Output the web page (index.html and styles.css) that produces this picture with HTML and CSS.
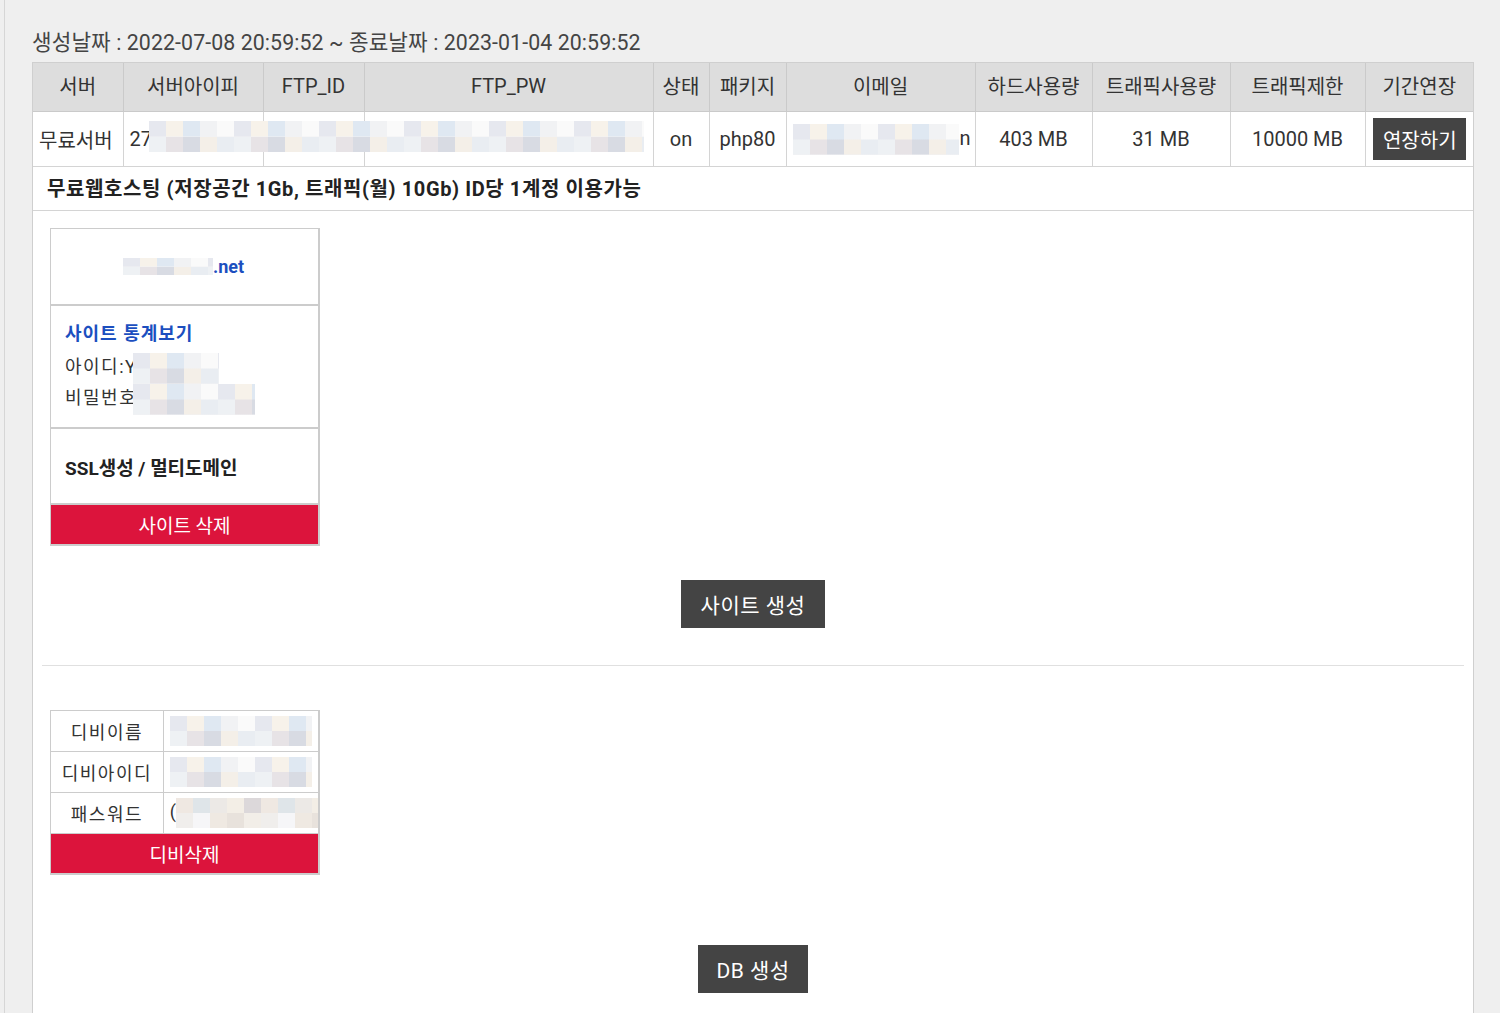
FILE: index.html
```html
<!DOCTYPE html>
<html lang="ko">
<head>
    <meta charset="UTF-8">
    <title>호스팅 관리</title>
    <link rel="stylesheet" href="styles.css">
</head>
<body>

    <div class="wrap">
        <div class="period">생성날짜 : 2022-07-08 20:59:52 ~ 종료날짜 : 2023-01-04 20:59:52</div>

        <div class="panel">
            <table class="host-table">
                <colgroup>
                    <col class="w-server">
                    <col class="w-ip">
                    <col class="w-ftpid">
                    <col class="w-ftppw">
                    <col class="w-state">
                    <col class="w-pkg">
                    <col class="w-mail">
                    <col class="w-disk">
                    <col class="w-traffic">
                    <col class="w-limit">
                    <col class="w-extend">
                </colgroup>
                <thead>
                    <tr>
                        <th>서버</th>
                        <th>서버아이피</th>
                        <th>FTP_ID</th>
                        <th>FTP_PW</th>
                        <th>상태</th>
                        <th>패키지</th>
                        <th>이메일</th>
                        <th>하드사용량</th>
                        <th>트래픽사용량</th>
                        <th>트래픽제한</th>
                        <th>기간연장</th>
                    </tr>
                </thead>
                <tbody>
                    <tr class="data-row">
                        <td>무료서버</td>
                        <td class="ip-cell">27<span class="mosaic mosaic-ftp"></span></td>
                        <td></td>
                        <td></td>
                        <td class="center">on</td>
                        <td class="center">php80</td>
                        <td class="mail-cell"><span class="mosaic mosaic-mail"></span>n</td>
                        <td class="center">403 MB</td>
                        <td class="center">31 MB</td>
                        <td class="center">10000 MB</td>
                        <td class="center"><button class="btn-dark btn-extend">연장하기</button></td>
                    </tr>
                    <tr>
                        <td class="notice" colspan="11">무료웹호스팅 (저장공간 1Gb, 트래픽(월) 10Gb) ID당 1계정 이용가능</td>
                    </tr>
                </tbody>
            </table>

            <div class="content">
                <div class="site-card">
                    <div class="site-domain"><span class="mosaic mosaic-domain"></span>.net</div>
                    <div class="site-stats">
                        <a class="stats-link">사이트 통계보기</a>
                        <div class="stats-line">아이디:Y<span class="mosaic mosaic-id"></span></div>
                        <div class="stats-line">비밀번호<span class="mosaic mosaic-pw"></span></div>
                    </div>
                    <div class="site-ssl">SSL생성 / 멀티도메인</div>
                    <button class="btn-red">사이트 삭제</button>
                </div>

                <div class="btn-row">
                    <button class="btn-dark btn-big">사이트 생성</button>
                </div>

                <hr class="divider">

                <div class="db-card">
                    <table class="db-table">
                        <tr>
                            <th>디비이름</th>
                            <td><span class="mosaic mosaic-db"></span></td>
                        </tr>
                        <tr>
                            <th>디비아이디</th>
                            <td><span class="mosaic mosaic-db"></span></td>
                        </tr>
                        <tr>
                            <th>패스워드</th>
                            <td>(<span class="mosaic mosaic-db mosaic-warm"></span></td>
                        </tr>
                    </table>
                    <button class="btn-red">디비삭제</button>
                </div>

                <div class="btn-row db-btn-row">
                    <button class="btn-dark btn-big btn-db">DB 생성</button>
                </div>
            </div>
        </div>
    </div>

</body>
</html>
```

FILE: styles.css
```css
body {
    margin: 0;
    background-color: #efefef;
    font-family: Roboto, "Noto Sans CJK KR", sans-serif;
    color: #333;
    font-size: 20px;
}
.wrap {
    margin-left: 4px;
    border-left: 1px solid #d6d6d6;
    padding: 27px 26px 0 27px;
    min-height: 986px;
}
.period {
    height: 35px;
    line-height: 32px;
    color: #444;
    font-size: 21.3px;
    letter-spacing: 0.1px;
}
.panel {
    background-color: #fff;
    border: 1px solid #cfcfcf;
    border-bottom: none;
    min-height: 951px;
}
.host-table {
    width: 100%;
    border-collapse: collapse;
    table-layout: fixed;
}
.w-server { width: 90px; }
.w-ip { width: 140px; }
.w-ftpid { width: 101px; }
.w-ftppw { width: 289px; }
.w-state { width: 56px; }
.w-pkg { width: 77px; }
.w-mail { width: 189px; }
.w-disk { width: 117px; }
.w-traffic { width: 138px; }
.w-limit { width: 135px; }
.w-extend { width: 108px; }
.host-table th {
    background-color: #dddddd;
    font-weight: 400;
    height: 45px;
    padding: 0 0 3px;
    border: 1px solid #cacaca;
    border-top: none;
    white-space: nowrap;
    color: #333;
}
.host-table th:first-child,
.host-table td:first-child {
    border-left: none;
}
.host-table th:last-child,
.host-table td:last-child {
    border-right: none;
}
.host-table td {
    border: 1px solid #d4d4d4;
    padding: 0 6px;
    height: 54px;
    white-space: nowrap;
}
.host-table .center {
    text-align: center;
    padding: 0;
}
.ip-cell {
    position: relative;
    padding-left: 7px;
}
.mail-cell {
    text-align: right;
    padding-right: 7px;
}
.host-table .notice {
    font-weight: 700;
    font-size: 20px;
    letter-spacing: 0.6px;
    height: 40px;
    padding: 0 0 3px 14px;
    color: #222;
    border-bottom: 1px solid #d4d4d4;
}
.mosaic {
    display: inline-block;
    vertical-align: middle;
    background-color: #f2f2f4;
    background-image:
        repeating-linear-gradient(90deg, #e6e8ef 0 17px, #f7f2ea 17px 34px, #dfe8f2 34px 51px, #f1f2f4 51px 68px, #fafafa 68px 85px),
        repeating-linear-gradient(90deg, #eef1f4 0 17px, #e7e3e6 17px 34px, #d8dbe3 34px 51px, #f4efe8 51px 68px, #e9edf2 68px 85px);
    background-size: 100% 50%, 100% 50%;
    background-position: top left, bottom left;
    background-repeat: no-repeat;
}
.mosaic-ftp {
    position: absolute;
    left: 25px;
    top: 9px;
    width: 495px;
    height: 31px;
}
.mosaic-mail {
    width: 166px;
    height: 31px;
    margin-right: 1px;
}
.content {
    padding: 17px 9px 40px;
}
.site-card,
.db-card {
    width: 267px;
    margin-left: 8px;
    border: 1px solid #cccccc;
    border-right-width: 2px;
    border-bottom-width: 2px;
    background-color: #fff;
}
.site-domain {
    height: 75px;
    display: flex;
    align-items: center;
    justify-content: center;
    font-size: 18px;
    font-weight: 700;
    color: #1c4fbf;
    border-bottom: 2px solid #cccccc;
    padding-right: 2px;
}
.mosaic-domain {
    width: 90px;
    height: 17px;
}
.site-stats {
    border-bottom: 2px solid #cccccc;
    padding: 14px 14px 14px;
    font-size: 18px;
    line-height: 31px;
}
.stats-link {
    display: block;
    color: #1c4fbf;
    font-weight: 700;
    line-height: 28px;
    letter-spacing: 1px;
    margin-bottom: 3px;
}
.stats-line {
    letter-spacing: 1.5px;
    color: #333;
    height: 31px;
}
.mosaic-id {
    width: 86px;
    height: 31px;
    margin-left: -4px;
}
.mosaic-pw {
    width: 122px;
    height: 31px;
    margin-left: -4px;
}
.site-ssl {
    height: 74px;
    display: flex;
    align-items: center;
    padding-left: 14px;
    font-size: 19px;
    font-weight: 700;
    color: #222;
    border-bottom: 2px solid #cccccc;
}
.btn-red {
    display: block;
    width: 100%;
    height: 39px;
    border: none;
    background-color: #dc143c;
    color: #fff;
    font-family: Roboto, "Noto Sans CJK KR", sans-serif;
    font-size: 19px;
    cursor: pointer;
}
.btn-row {
    display: flex;
    justify-content: center;
    padding-top: 34px;
}
.btn-dark {
    background-color: #444;
    color: #fff;
    border: none;
    font-family: Roboto, "Noto Sans CJK KR", sans-serif;
    cursor: pointer;
}
.btn-extend {
    width: 93px;
    height: 42px;
    font-size: 20px;
    padding: 0;
    margin-left: 1px;
}
.btn-big {
    width: 144px;
    height: 48px;
    font-size: 21px;
    letter-spacing: 0.5px;
    padding: 0;
}
.btn-db {
    width: 110px;
}
.divider {
    border: none;
    border-top: 1px solid #e0e0e0;
    margin: 37px 0 44px;
}
.db-table {
    width: 100%;
    border-collapse: collapse;
}
.db-table th,
.db-table td {
    border-bottom: 1px solid #cccccc;
    height: 40px;
    font-size: 18px;
    font-weight: 400;
    padding: 0;
}
.db-table th {
    width: 116px;
    border-right: 1px solid #cccccc;
    letter-spacing: 1.5px;
    color: #333;
}
.db-table td {
    padding-left: 6px;
    white-space: nowrap;
}
.mosaic-db {
    width: 142px;
    height: 30px;
}
.mosaic-warm {
    background-image:
        repeating-linear-gradient(90deg, #efe8e2 0 17px, #dfe5e9 17px 34px, #ece9e6 34px 51px, #f3eee6 51px 68px, #dcd8da 68px 85px),
        repeating-linear-gradient(90deg, #f0eeec 0 17px, #f6f6f8 17px 34px, #efe9e2 34px 51px, #e8e2dc 51px 68px, #f2eee8 68px 85px);
}
.db-btn-row {
    padding-top: 70px;
}
```
